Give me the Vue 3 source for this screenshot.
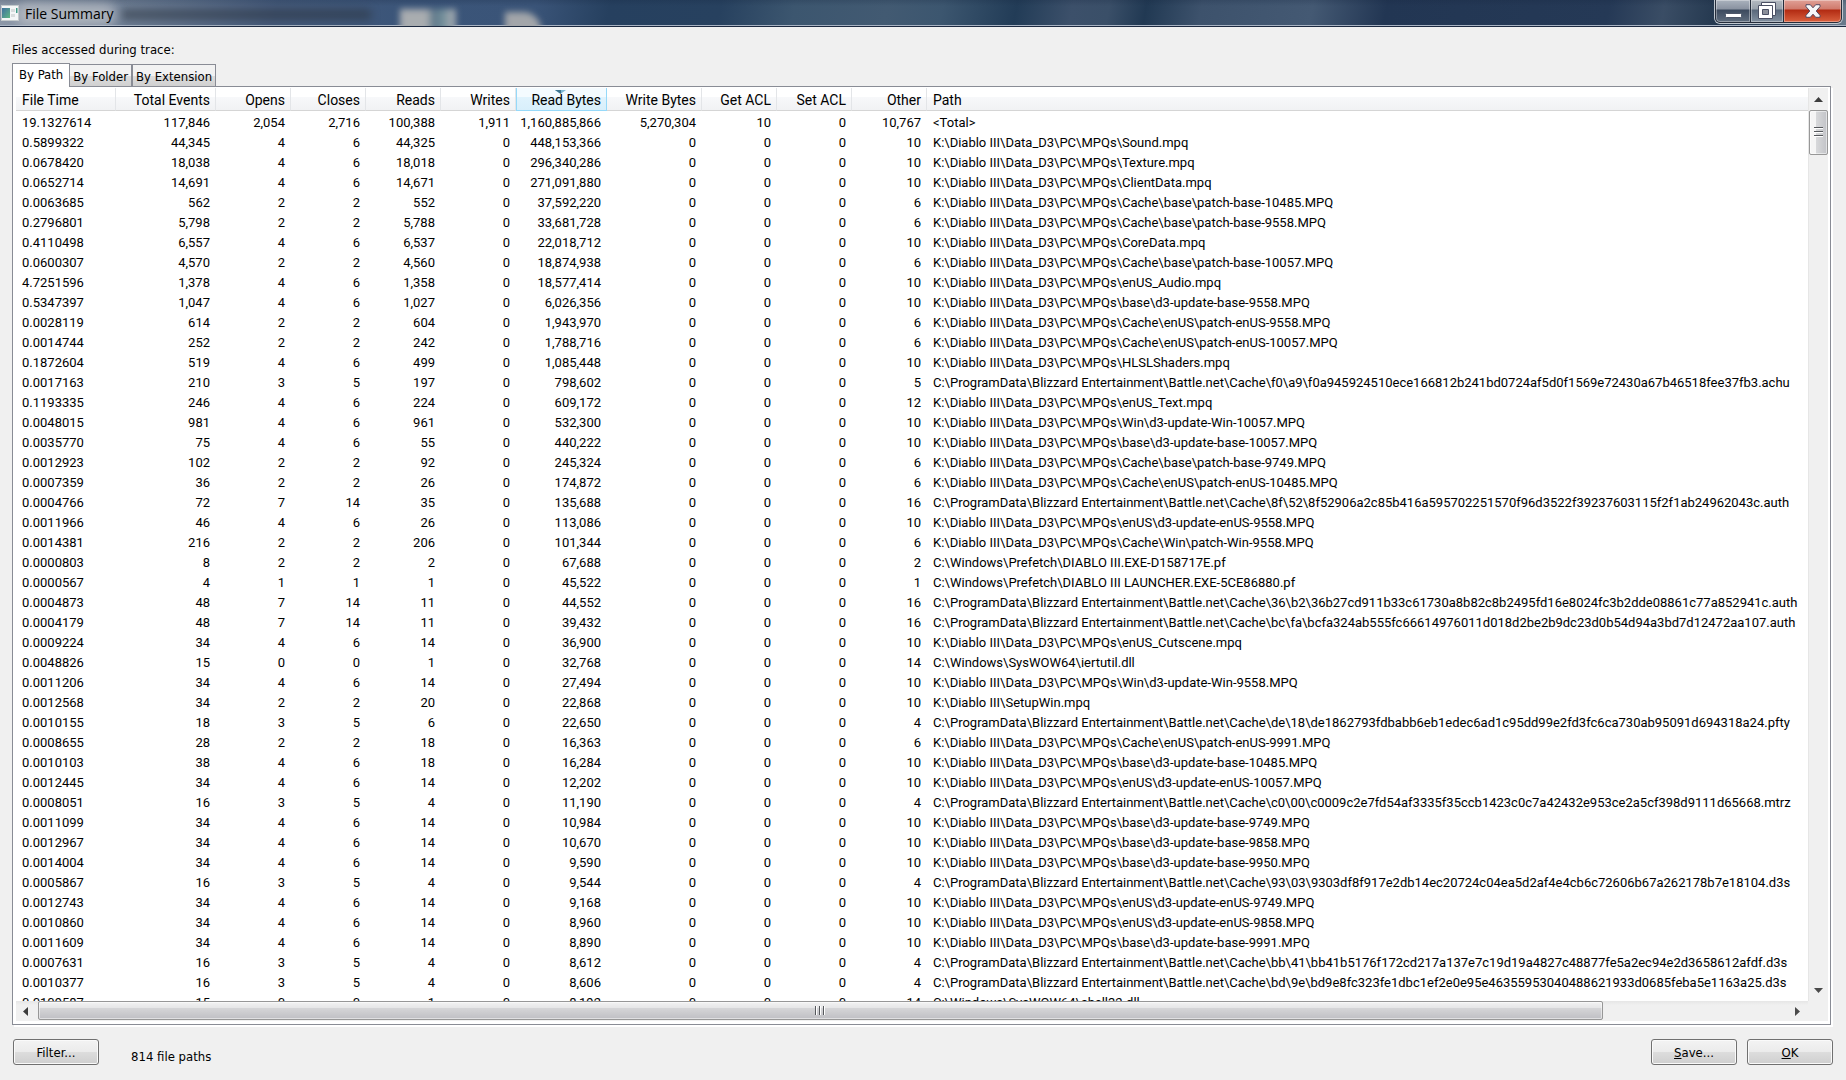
<script setup>
import { ref } from 'vue'

const tabs = ['By Path', 'By Folder', 'By Extension']
const activeTab = ref('By Path')

const columns = [
  { label: 'File Time', cls: 'c-time' },
  { label: 'Total Events', cls: 'c-events' },
  { label: 'Opens', cls: 'c-num' },
  { label: 'Closes', cls: 'c-num' },
  { label: 'Reads', cls: 'c-num' },
  { label: 'Writes', cls: 'c-num' },
  { label: 'Read Bytes', cls: 'c-read', sorted: true },
  { label: 'Write Bytes', cls: 'c-write' },
  { label: 'Get ACL', cls: 'c-num' },
  { label: 'Set ACL', cls: 'c-num' },
  { label: 'Other', cls: 'c-num' },
  { label: 'Path', cls: 'c-path' },
]

const mpq = 'K:\\Diablo III\\Data_D3\\PC\\MPQs\\'
const bnet = 'C:\\ProgramData\\Blizzard Entertainment\\Battle.net\\Cache\\'

// time, events, opens, closes, reads, read bytes, other, path
const files = [
  ['0.5899322', '44,345', 4, 6, '44,325', '448,153,366', 10, mpq + 'Sound.mpq'],
  ['0.0678420', '18,038', 4, 6, '18,018', '296,340,286', 10, mpq + 'Texture.mpq'],
  ['0.0652714', '14,691', 4, 6, '14,671', '271,091,880', 10, mpq + 'ClientData.mpq'],
  ['0.0063685', '562', 2, 2, '552', '37,592,220', 6, mpq + 'Cache\\base\\patch-base-10485.MPQ'],
  ['0.2796801', '5,798', 2, 2, '5,788', '33,681,728', 6, mpq + 'Cache\\base\\patch-base-9558.MPQ'],
  ['0.4110498', '6,557', 4, 6, '6,537', '22,018,712', 10, mpq + 'CoreData.mpq'],
  ['0.0600307', '4,570', 2, 2, '4,560', '18,874,938', 6, mpq + 'Cache\\base\\patch-base-10057.MPQ'],
  ['4.7251596', '1,378', 4, 6, '1,358', '18,577,414', 10, mpq + 'enUS_Audio.mpq'],
  ['0.5347397', '1,047', 4, 6, '1,027', '6,026,356', 10, mpq + 'base\\d3-update-base-9558.MPQ'],
  ['0.0028119', '614', 2, 2, '604', '1,943,970', 6, mpq + 'Cache\\enUS\\patch-enUS-9558.MPQ'],
  ['0.0014744', '252', 2, 2, '242', '1,788,716', 6, mpq + 'Cache\\enUS\\patch-enUS-10057.MPQ'],
  ['0.1872604', '519', 4, 6, '499', '1,085,448', 10, mpq + 'HLSLShaders.mpq'],
  ['0.0017163', '210', 3, 5, '197', '798,602', 5, bnet + 'f0\\a9\\f0a945924510ece166812b241bd0724af5d0f1569e72430a67b46518fee37fb3.achu'],
  ['0.1193335', '246', 4, 6, '224', '609,172', 12, mpq + 'enUS_Text.mpq'],
  ['0.0048015', '981', 4, 6, '961', '532,300', 10, mpq + 'Win\\d3-update-Win-10057.MPQ'],
  ['0.0035770', '75', 4, 6, '55', '440,222', 10, mpq + 'base\\d3-update-base-10057.MPQ'],
  ['0.0012923', '102', 2, 2, '92', '245,324', 6, mpq + 'Cache\\base\\patch-base-9749.MPQ'],
  ['0.0007359', '36', 2, 2, '26', '174,872', 6, mpq + 'Cache\\enUS\\patch-enUS-10485.MPQ'],
  ['0.0004766', '72', 7, 14, '35', '135,688', 16, bnet + '8f\\52\\8f52906a2c85b416a595702251570f96d3522f39237603115f2f1ab24962043c.auth'],
  ['0.0011966', '46', 4, 6, '26', '113,086', 10, mpq + 'enUS\\d3-update-enUS-9558.MPQ'],
  ['0.0014381', '216', 2, 2, '206', '101,344', 6, mpq + 'Cache\\Win\\patch-Win-9558.MPQ'],
  ['0.0000803', '8', 2, 2, '2', '67,688', 2, 'C:\\Windows\\Prefetch\\DIABLO III.EXE-D158717E.pf'],
  ['0.0000567', '4', 1, 1, '1', '45,522', 1, 'C:\\Windows\\Prefetch\\DIABLO III LAUNCHER.EXE-5CE86880.pf'],
  ['0.0004873', '48', 7, 14, '11', '44,552', 16, bnet + '36\\b2\\36b27cd911b33c61730a8b82c8b2495fd16e8024fc3b2dde08861c77a852941c.auth'],
  ['0.0004179', '48', 7, 14, '11', '39,432', 16, bnet + 'bc\\fa\\bcfa324ab555fc66614976011d018d2be2b9dc23d0b54d94a3bd7d12472aa107.auth'],
  ['0.0009224', '34', 4, 6, '14', '36,900', 10, mpq + 'enUS_Cutscene.mpq'],
  ['0.0048826', '15', 0, 0, '1', '32,768', 14, 'C:\\Windows\\SysWOW64\\iertutil.dll'],
  ['0.0011206', '34', 4, 6, '14', '27,494', 10, mpq + 'Win\\d3-update-Win-9558.MPQ'],
  ['0.0012568', '34', 2, 2, '20', '22,868', 10, 'K:\\Diablo III\\SetupWin.mpq'],
  ['0.0010155', '18', 3, 5, '6', '22,650', 4, bnet + 'de\\18\\de1862793fdbabb6eb1edec6ad1c95dd99e2fd3fc6ca730ab95091d694318a24.pfty'],
  ['0.0008655', '28', 2, 2, '18', '16,363', 6, mpq + 'Cache\\enUS\\patch-enUS-9991.MPQ'],
  ['0.0010103', '38', 4, 6, '18', '16,284', 10, mpq + 'base\\d3-update-base-10485.MPQ'],
  ['0.0012445', '34', 4, 6, '14', '12,202', 10, mpq + 'enUS\\d3-update-enUS-10057.MPQ'],
  ['0.0008051', '16', 3, 5, '4', '11,190', 4, bnet + 'c0\\00\\c0009c2e7fd54af3335f35ccb1423c0c7a42432e953ce2a5cf398d9111d65668.mtrz'],
  ['0.0011099', '34', 4, 6, '14', '10,984', 10, mpq + 'base\\d3-update-base-9749.MPQ'],
  ['0.0012967', '34', 4, 6, '14', '10,670', 10, mpq + 'base\\d3-update-base-9858.MPQ'],
  ['0.0014004', '34', 4, 6, '14', '9,590', 10, mpq + 'base\\d3-update-base-9950.MPQ'],
  ['0.0005867', '16', 3, 5, '4', '9,544', 4, bnet + '93\\03\\9303df8f917e2db14ec20724c04ea5d2af4e4cb6c72606b67a262178b7e18104.d3s'],
  ['0.0012743', '34', 4, 6, '14', '9,168', 10, mpq + 'enUS\\d3-update-enUS-9749.MPQ'],
  ['0.0010860', '34', 4, 6, '14', '8,960', 10, mpq + 'enUS\\d3-update-enUS-9858.MPQ'],
  ['0.0011609', '34', 4, 6, '14', '8,890', 10, mpq + 'base\\d3-update-base-9991.MPQ'],
  ['0.0007631', '16', 3, 5, '4', '8,612', 4, bnet + 'bb\\41\\bb41b5176f172cd217a137e7c19d19a4827c48877fe5a2ec94e2d3658612afdf.d3s'],
  ['0.0010377', '16', 3, 5, '4', '8,606', 4, bnet + 'bd\\9e\\bd9e8fc323fe1dbc1ef2e0e95e46355953040488621933d0685feba5e1163a25.d3s'],
  ['0.0109587', '15', 0, 0, '1', '8,192', 14, 'C:\\Windows\\SysWOW64\\shell32.dll'],
]

const rows = [
  ['19.1327614', '117,846', '2,054', '2,716', '100,388', '1,911', '1,160,885,866', '5,270,304', 10, 0, '10,767', '<Total>'],
  ...files.map(([t, e, o, c, r, rb, ot, p]) => [t, e, o, c, r, 0, rb, 0, 0, 0, ot, p]),
]
</script>

<template>
  <div class="window">
    <header class="titlebar">
      <i class="smear smear-text"></i>
      <i class="smear smear-a"></i>
      <i class="smear smear-b"></i>
      <i class="smear smear-glow"></i>
      <svg class="app-icon" width="18" height="16" viewBox="0 0 18 16" aria-hidden="true">
        <defs>
          <linearGradient id="pane" x1="0" y1="0" x2="1" y2="1">
            <stop offset="0" stop-color="#3f6fa0" />
            <stop offset="1" stop-color="#5fb784" />
          </linearGradient>
        </defs>
        <rect x="0.5" y="0.5" width="17" height="15" fill="#f4f6f7" stroke="#c3c9cc" />
        <rect x="1" y="3" width="8" height="10" fill="url(#pane)" />
        <path d="M10 4h4v3h-4zM10 9h4v3h-4z" fill="#d8dcdd" />
        <path d="M15 3h1.500v5H15z" fill="#3d9a86" />
      </svg>
      <h1 class="title">File Summary</h1>
      <div class="caption-buttons">
        <button class="cap cap-min" aria-label="Minimize">
          <svg width="17" height="5" viewBox="0 0 17 5"><rect x="0.5" y="0.500" width="16" height="4" rx="1" fill="#fff" stroke="#4d5668" /></svg>
        </button>
        <button class="cap cap-max" aria-label="Restore">
          <svg width="18" height="17" viewBox="0 0 18 17">
            <path d="M3.500 0.500h14v13h-14z" fill="#fff" stroke="#4b5064" />
            <path d="M0.500 3.500h14v13H.5z" fill="#fff" stroke="#4b5064" />
            <path d="M4.500 7.500h6v5h-6z" fill="#8b8f99" stroke="#4b5064" />
          </svg>
        </button>
        <button class="cap cap-close" aria-label="Close">
          <svg width="16" height="14" viewBox="0 0 16 14">
            <path d="M1 .7h4.300L8 3.800 10.700.7H15v2L11.200 7l3.800 4.300v2h-4.300L8 10.200l-2.700 3.100H1v-2L4.800 7 1 2.700z" fill="#f7f7f8" stroke="#544b62" />
          </svg>
        </button>
      </div>
    </header>

    <main class="body">
      <p class="caption">Files accessed during trace:</p>
      <div class="tabs" role="tablist">
        <button
          v-for="t in tabs"
          :key="t"
          role="tab"
          class="tab"
          :class="{ active: t === activeTab }"
          :aria-selected="t === activeTab"
          @click="activeTab = t"
        >{{ t }}</button>
      </div>

      <section class="panel" role="tabpanel">
        <div class="list">
          <table>
            <thead>
              <tr>
                <th v-for="c in columns" :key="c.label" :class="[c.cls, { sorted: c.sorted }]" scope="col">
                  {{ c.label }}
                  <svg v-if="c.sorted" class="sort" width="11" height="4" viewBox="0 0 11 4" aria-hidden="true">
                    <path d="M0 0h11L5.500 4z" fill="#7fb9d3" />
                    <path d="M0 0h6v4z" fill="#3f7590" />
                  </svg>
                </th>
              </tr>
            </thead>
            <tbody>
              <tr v-for="(r, i) in rows" :key="i">
                <td v-for="(v, j) in r" :key="j">{{ v }}</td>
              </tr>
            </tbody>
          </table>
        </div>

        <div class="vbar">
          <button class="arrow" aria-label="Scroll up">
            <svg width="9" height="5" viewBox="0 0 9 5"><path d="M4.500 0L9 5H0z" fill="#3c3c3c" /></svg>
          </button>
          <div class="track">
            <div class="thumb"><svg width="9" height="11" viewBox="0 0 9 11"><path d="M0 .5h9M0 4.500h9M0 8.500h9" stroke="#55585c" /><path d="M0 1.500h9M0 5.500h9M0 9.500h9" stroke="#fff" /></svg></div>
          </div>
          <button class="arrow" aria-label="Scroll down">
            <svg width="9" height="5" viewBox="0 0 9 5"><path d="M0 0h9L4.500 5z" fill="#4a4a4a" /></svg>
          </button>
        </div>

        <div class="hbar">
          <button class="arrow arrow-left" aria-label="Scroll left">
            <svg width="5" height="9" viewBox="0 0 5 9"><path d="M5 0v9L0 4.500z" fill="#3c3c3c" /></svg>
          </button>
          <div class="track">
            <div class="thumb"><svg width="11" height="9" viewBox="0 0 11 9"><path d="M.5 0v9M4.500 0v9M8.500 0v9" stroke="#55585c" /><path d="M1.500 0v9M5.500 0v9M9.500 0v9" stroke="#fff" /></svg></div>
          </div>
          <button class="arrow" aria-label="Scroll right">
            <svg width="5" height="9" viewBox="0 0 5 9"><path d="M0 0v9l5-4.500z" fill="#4a4a4a" /></svg>
          </button>
        </div>
        <div class="corner"></div>
      </section>

      <footer class="footer">
        <button class="btn">Filter...</button>
        <span class="count">814 file paths</span>
        <span class="spacer"></span>
        <button class="btn"><u>S</u>ave...</button>
        <button class="btn"><u>O</u>K</button>
      </footer>
    </main>
  </div>
</template>

<style>
html,
body {
  margin: 0;
  overflow: hidden;
}
</style>

<style scoped>
* {
  box-sizing: border-box;
}
button {
  margin: 0;
  padding: 0;
  border: 0;
  background: none;
  font: inherit;
  color: inherit;
}
.window {
  height: 100vh;
  display: flex;
  flex-direction: column;
  background: #f0f0f0;
  color: #000;
  font: 13px/16px 'DejaVu Sans Condensed', 'DejaVu Sans', sans-serif;
}

/* title bar */
.titlebar {
  position: relative;
  flex: none;
  height: 27px;
  display: flex;
  justify-content: space-between;
  overflow: hidden;
  border-bottom: 1px solid #1c2940;
  box-shadow: inset 0 -1px #a9b4c4;
  background:
    linear-gradient(rgba(20, 35, 60, 0.2), transparent 6px),
    linear-gradient(100deg, #8d98a8 0, #6f7f95 7%, #44597a 15%, #3b5579 22%, #3a5478 29%, #26405f 33%, #27415f 39%, #3c566f 43%, #425a72 48%, #3c566f 51%, #223c57 55%, #3c506a 58%, #3a4f68 60%, #213953 62%, #3d526c 65%, #445973 71%, #223653 75%, #253956 87%, #3a4d65 90%, #24384f 93%, #34495e 96%, #6a7b8c 100%);
}
.smear {
  position: absolute;
}
.smear-glow {
  left: 16px;
  top: 4px;
  width: 100px;
  height: 22px;
  border-radius: 10px;
  background: rgba(196, 200, 204, 0.7);
  filter: blur(6px);
}
.smear-text {
  left: 120px;
  top: 9px;
  width: 252px;
  height: 11px;
  border-radius: 6px;
  background: rgba(44, 52, 64, 0.55);
  filter: blur(4px);
}
.smear-a {
  left: 400px;
  top: 9px;
  width: 56px;
  height: 24px;
  background: linear-gradient(90deg, #a9adb0 48%, #60788a 60%, #6e8c98 75%, #9aa4ac 90%);
  filter: blur(3px);
}
.smear-b {
  left: 505px;
  top: 12px;
  width: 36px;
  height: 24px;
  border-radius: 0 18px 0 0;
  background: #a3a6aa;
  filter: blur(3px);
}
.app-icon {
  position: relative;
  margin: 5px 6px 0 1px;
}
.title {
  position: relative;
  flex: 1;
  margin: 0;
  font: 14px/28px 'Open Sans', 'Noto Sans', sans-serif;
}
.caption-buttons {
  position: relative;
  display: flex;
  height: 24px;
  margin-right: 3px;
  border: 1px solid #c0c7cf;
  border-top: 0;
  border-radius: 0 0 6px 6px;
  overflow: hidden;
}
.cap {
  display: flex;
  align-items: center;
  justify-content: center;
  border: 1px solid #252d3b;
  border-top: 0;
  box-shadow: inset 0 0 0 1px rgba(255, 255, 255, 0.35);
  background: linear-gradient(#aab2bd 0, #8992a0 9px, #3c4a5e 10px, #5f6d7e 100%);
}
.cap + .cap {
  border-left: 0;
}
.cap-min {
  width: 36px;
  padding-top: 8px;
  border-bottom-left-radius: 5px;
}
.cap-max {
  width: 33px;
  padding-bottom: 2px;
  background: linear-gradient(#b4bac1 0, #98a1ab 9px, #59677a 10px, #8391a0 100%);
}
.cap-close {
  width: 58px;
  padding-bottom: 1px;
  border-bottom-right-radius: 5px;
  background: linear-gradient(#e0a096 0, #d07a6c 9px, #b22a12 10px, #d9603e 100%);
}

/* dialog body */
.body {
  flex: 1;
  min-height: 0;
  display: flex;
  flex-direction: column;
  padding: 15px 13px 15px 12px;
}
.caption {
  margin: 0 0 5px;
}
.tabs {
  position: relative;
  z-index: 1;
  flex: none;
  display: flex;
  align-items: flex-end;
  height: 24px;
  margin-bottom: -1px;
}
.tab {
  height: 22px;
  margin-bottom: 1px;
  padding: 2px 3px 0;
  border: 1px solid #898c95;
  border-bottom: 0;
  background: linear-gradient(#f2f2f2 50%, #dedede 50%, #d0d0d0);
}
.tab:nth-child(2) {
  border-left: 0;
}
.tab.active {
  height: 24px;
  margin-bottom: 0;
  padding: 0 6px 1px;
  background: #fff;
}
.panel {
  flex: 1;
  min-height: 0;
  display: grid;
  grid-template: minmax(0, 1fr) 20px / minmax(0, 1fr) 20px;
  margin-right: 2px;
  padding: 1px 2px 3px 3px;
  border: 1px solid #898c95;
  background: #fff;
  box-shadow: 2px 2px #fff;
}

/* list view */
.list {
  overflow: hidden;
  font: 13px/20px Roboto, 'Liberation Sans', sans-serif;
}
table {
  width: 100%;
  table-layout: fixed;
  border-collapse: separate;
  border-spacing: 0;
}
th {
  position: relative;
  height: 23px;
  padding: 3px 5px 0 0;
  border-right: 1px solid #e3e5e8;
  border-bottom: 1px solid #d5d5d5;
  background: linear-gradient(#fff 9px, #f7f8fa 9px, #f1f2f4);
  font-size: 14px;
  line-height: 19px;
  font-weight: 400;
  text-align: right;
  white-space: nowrap;
}
th.sorted {
  border-color: #96d9f9;
  background: linear-gradient(#f4fbff 9px, #e0f3fd 9px, #d8effb);
  box-shadow: inset 1px 0 #96d9f9;
}
.sort {
  position: absolute;
  left: 50%;
  top: 2px;
  margin-left: -6px;
}
.c-time {
  width: 100px;
  padding-left: 6px;
  text-align: left;
}
.c-events {
  width: 100px;
}
.c-num {
  width: 75px;
}
.c-read {
  width: 91px;
}
.c-write {
  width: 95px;
}
.c-path {
  padding-left: 6px;
  border-right: 0;
  text-align: left;
}
tbody::before {
  content: '';
  display: block;
  height: 2px;
}
td {
  height: 20px;
  padding: 0 6px 0 0;
  text-align: right;
  white-space: nowrap;
}
td:first-child,
td:last-child {
  padding: 0 0 0 6px;
  text-align: left;
}

/* scroll bars */
.vbar,
.hbar {
  display: flex;
  background: #f0f0f0;
}
.vbar {
  flex-direction: column;
  border-left: 1px solid #e6e6e6;
}
.hbar {
  background: linear-gradient(#e6e6e6, #f0f0f0 4px);
}
.arrow {
  flex: none;
  width: 22px;
  height: 20px;
  display: flex;
  align-items: center;
  justify-content: center;
}
.arrow-left {
  padding-right: 4px;
}
.vbar .arrow {
  width: 19px;
  height: 22px;
}
.track {
  flex: 1;
  min-width: 0;
  min-height: 0;
}
.thumb {
  display: flex;
  align-items: center;
  justify-content: center;
  border: 1px solid #979797;
  border-radius: 2px;
  box-shadow: inset 0 0 0 1px rgba(255, 255, 255, 0.5);
}
.vbar .thumb {
  height: 45px;
  background: linear-gradient(90deg, #f5f5f5 35%, #d8d9db 35%, #c2c3c7);
}
.hbar .thumb {
  width: calc(90% - 8px);
  height: 19px;
  background: linear-gradient(#f3f3f3, #e6e6e7 35%, #d6d6d8 35%, #bfbfc4);
}
.corner {
  background: #f0f0f0;
}

/* footer */
.footer {
  flex: none;
  display: flex;
  gap: 10px;
  margin-top: 14px;
  padding-left: 1px;
}
.btn {
  width: 86px;
  height: 26px;
  padding-top: 1px;
  border: 1px solid #707070;
  border-radius: 3px;
  box-shadow: inset 0 0 0 1px #fafafa;
  background: linear-gradient(#f3f3f3, #ebebeb 50%, #dddddd 50%, #cfcfcf);
}
.count {
  margin-left: 22px;
  padding-top: 10px;
}
.spacer {
  flex: 1;
}
</style>
